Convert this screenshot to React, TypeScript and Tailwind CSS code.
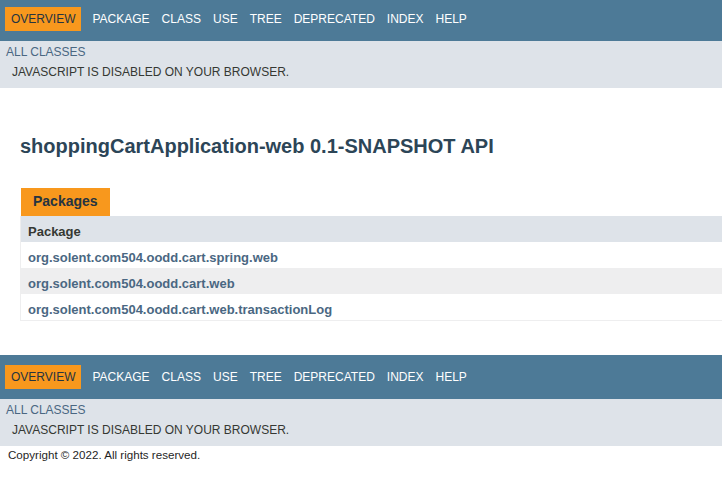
const navItems = ["Overview", "Package", "Class", "Use", "Tree", "Deprecated", "Index", "Help"];

const packages = [
  "org.solent.com504.oodd.cart.spring.web",
  "org.solent.com504.oodd.cart.web",
  "org.solent.com504.oodd.cart.web.transactionLog",
];

const NavBar = ({ top, height }: { top: string; height: string }) => (
  <div className={`bg-[#4d7a97] ${height} ${top}`}>
    <ul className="flex text-[12px] leading-[14px] uppercase">
      {navItems.map((item, i) =>
        i === 0 ? (
          <li key={item} className="mx-[5px] bg-[#f8981d] px-[6px] py-[5px] text-[#253441]">
            {item}
          </li>
        ) : (
          <li key={item} className="px-[6px] py-[5px] text-white">
            {item}
          </li>
        )
      )}
    </ul>
  </div>
);

const SubNav = () => (
  <div className="h-[47px] bg-[#dee3e9] pt-[4px] text-[12px] leading-[14px]">
    <div className="pl-[6px] text-[#4a6782]">ALL CLASSES</div>
    <div className="mt-[6px] pl-[12px] text-[#353833]">JAVASCRIPT IS DISABLED ON YOUR BROWSER.</div>
  </div>
);

export default function App() {
  return (
    <div className="h-[492px] w-[722px] overflow-hidden bg-white font-['Liberation_Sans',Arial,sans-serif] text-[#353833]">
      <NavBar top="pt-[7px]" height="h-[41px]" />
      <SubNav />

      <h1 className="mt-[47px] pl-[20px] text-[20px] leading-[23px] font-bold text-[#2c4557]">
        shoppingCartApplication-web 0.1-SNAPSHOT API
      </h1>

      <div className="mt-[30px] ml-[20px]">
        <div className="ml-[1px] inline-block h-[28px] bg-[#f8981d] px-[12px] pt-[5px] text-[14px] leading-[16px] font-bold text-[#253441]">
          Packages
        </div>
        <div className="border-b border-l border-[#eeeeef] text-[13px] leading-[15px] font-bold">
          <div className="h-[26px] bg-[#dee3e9] pt-[8px] pl-[7px] text-[#353833]">Package</div>
          {packages.map((pkg, i) => (
            <div
              key={pkg}
              className={`h-[26px] pt-[8px] pl-[7px] text-[#4a6782] ${i % 2 === 1 ? "bg-[#eeeeef]" : "bg-white"}`}
            >
              {pkg}
            </div>
          ))}
        </div>
      </div>

      <div className="mt-[34px]">
        <NavBar top="pt-[10px]" height="h-[44px]" />
        <SubNav />
      </div>

      <p className="pl-[8px] pt-[2px] text-[11.6px] leading-[14px] text-[#1f1f1f]">
        Copyright © 2022. All rights reserved.
      </p>
    </div>
  );
}
